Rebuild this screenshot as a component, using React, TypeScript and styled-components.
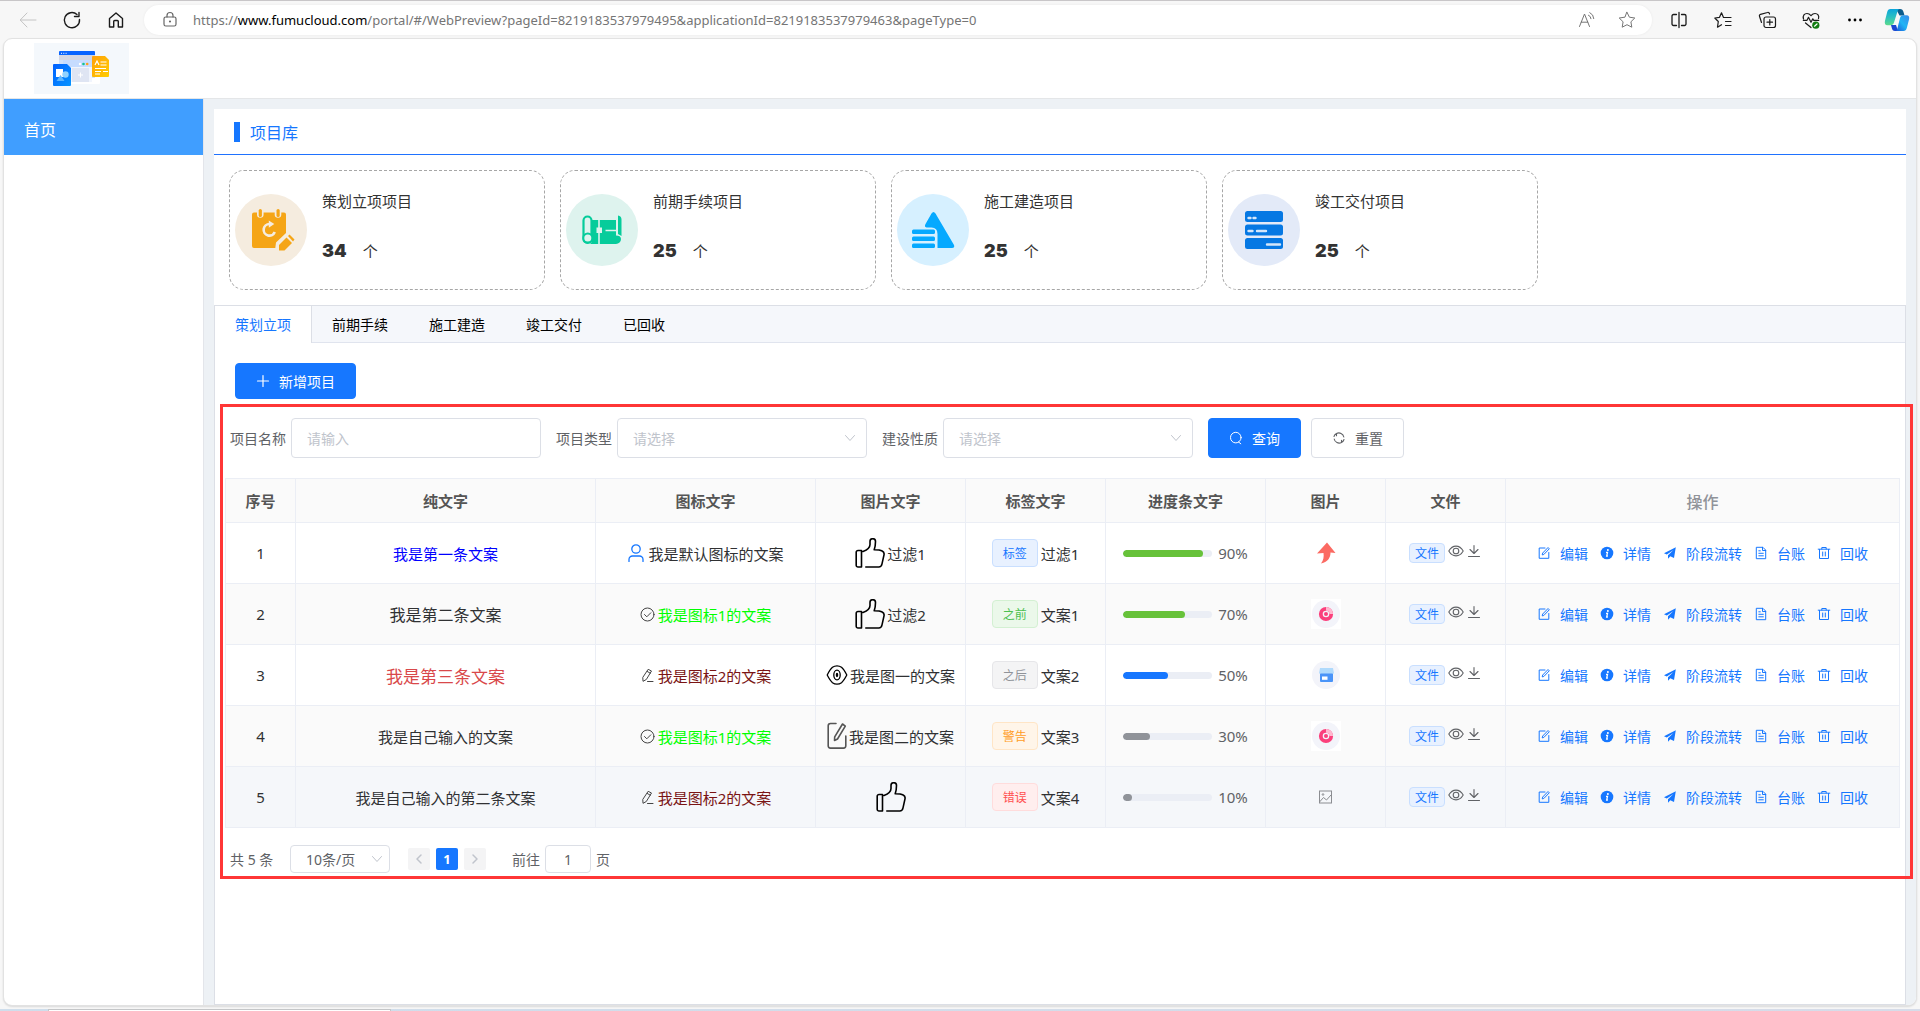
import React from "react";
import styled, { createGlobalStyle } from "styled-components";

const SANS = '"Noto Sans", "Noto Sans CJK SC", sans-serif';

const GlobalStyle = createGlobalStyle`
  *, *::before, *::after { box-sizing: border-box; }
  body { margin: 0; background: #f7f7f7; font-family: ${SANS}; font-size: 14px; color: #303133; }
  button, input, select { font: inherit; margin: 0; }
  button { cursor: pointer; padding: 0; background: none; border: 0; color: inherit; }
  svg { display: block; flex: none; }
`;

/* ---------- browser shell ---------- */

const Browser = styled.div`
  display: flex;
  flex-direction: column;
  min-height: 100vh;
`;

const AddressRow = styled.header`
  display: flex;
  align-items: center;
  height: 38px;
  padding: 1px 3px 0 6px;
  border-top: 1px solid #c8c6c8;
  color: #1b1b1b;
`;

const ChromeButton = styled.button<{ $width?: number; $color?: string }>`
  display: grid;
  place-items: center;
  width: ${(p) => p.$width ?? 44}px;
  height: 30px;
  color: ${(p) => p.$color ?? "#1b1b1b"};
`;

const UrlPill = styled.div`
  flex: 1;
  display: flex;
  align-items: center;
  height: 30px;
  margin: 0 5px 0 6px;
  padding: 0 5px 0 14px;
  border-radius: 15px;
  background: #fff;
  box-shadow: 0 0 3px rgba(0, 0, 0, 0.06);
`;

const UrlText = styled.div`
  flex: 1;
  margin-left: 11px;
  font-family: "Noto Sans", sans-serif;
  font-size: 13px;
  line-height: 20px;
  color: #757575;
  white-space: nowrap;
  overflow: hidden;
`;

const UrlHost = styled.span`
  color: #000;
`;

const PageFrame = styled.div`
  flex: 1;
  display: flex;
  flex-direction: column;
  margin: 0 3px;
  border: 1px solid #e2e2e2;
  border-radius: 9px;
  background: #fff;
  overflow: hidden;
  box-shadow: 0 1px 2px rgba(0, 0, 0, 0.12);
`;

const Taskbar = styled.div`
  display: flex;
  height: 2px;
  margin-top: 3px;
  padding-left: 48px;
  background: linear-gradient(90deg, #cfdeec, #d6dce9);
`;

const TaskbarWindow = styled.div`
  width: 343px;
  border: 1px solid #c4c6c8;
  border-bottom: 0;
  background: #fff;
`;

/* ---------- application layout ---------- */

const AppHeader = styled.div`
  height: 60px;
  padding: 4px 30px;
  border-bottom: 1px solid #e4e6e8;
`;

const AppBody = styled.div`
  flex: 1;
  display: flex;
`;

const Sidebar = styled.nav`
  width: 200px;
  border-right: 1px solid #e3e5ea;
`;

const SidebarLink = styled.a`
  display: flex;
  align-items: center;
  height: 56px;
  padding: 4px 20px 0;
  background: #409eff;
  color: #fff;
  font-size: 16px;
  text-decoration: none;
`;

const Main = styled.main`
  flex: 1;
  display: flex;
  flex-direction: column;
  min-width: 0;
  padding: 10px 10px 0;
  background: #edf1f5;
`;

const Overview = styled.section`
  background: #fff;
`;

const SectionTitle = styled.h1`
  display: flex;
  align-items: center;
  gap: 10px;
  height: 46px;
  margin: 0;
  padding: 0 20px;
  border-bottom: 1px solid #1f72ff;
  color: #1677ff;
  font-size: 16px;
  font-weight: 400;

  &::before {
    content: "";
    width: 6px;
    height: 20px;
    background: #1677ff;
  }
`;

const StatRow = styled.div`
  display: grid;
  grid-template-columns: repeat(4, minmax(0, 316px));
  gap: 15px;
  padding: 15px;
`;

const StatCard = styled.article`
  display: flex;
  align-items: center;
  gap: 15px;
  height: 120px;
  padding: 0 5px;
  border: 1px dashed #a6a6a6;
  border-radius: 15px;
`;

const StatInfo = styled.div`
  align-self: flex-start;
  display: flex;
  flex-direction: column;
  gap: 25px;
  padding-top: 18px;
`;

const StatName = styled.div`
  font-size: 15px;
  line-height: 24px;
  color: #333;
`;

const StatValue = styled.div`
  display: flex;
  align-items: center;
  gap: 16px;
  line-height: 26px;
  font-size: 15px;
  color: #333;
`;

const StatNumber = styled.strong`
  font-family: Inter, "DejaVu Sans", sans-serif;
  font-size: 18px;
  font-weight: 900;
`;

const Panel = styled.section`
  flex: 1;
  display: flex;
  flex-direction: column;
  border: 1px solid #dcdfe6;
  background: #fff;
`;

const TabList = styled.div`
  display: flex;
  height: 37px;
  border-bottom: 1px solid #e0e4ee;
  background: #f5f7fb;
`;

const Tab = styled.button<{ $active?: boolean }>`
  height: 37px;
  padding: 0 20px 2px;
  border-right: 1px solid ${(p) => (p.$active ? "#dcdfe6" : "transparent")};
  background: ${(p) => (p.$active ? "#fff" : "transparent")};
  color: ${(p) => (p.$active ? "#1677ff" : "#000")};
  font-size: 14px;
`;

const PanelToolbar = styled.div`
  padding: 20px 20px 5px;
`;

const ActionButton = styled.button<{ $primary?: boolean; $height?: number }>`
  display: inline-flex;
  align-items: center;
  gap: 9px;
  height: ${(p) => p.$height ?? 40}px;
  padding: 0 20px;
  border: 1px solid ${(p) => (p.$primary ? "#1677ff" : "#dcdfe6")};
  border-radius: 4px;
  background: ${(p) => (p.$primary ? "#1677ff" : "#fff")};
  color: ${(p) => (p.$primary ? "#fff" : "#606266")};
  font-size: 14px;
  vertical-align: top;
`;

const Highlight = styled.div`
  margin: 0 -8px 0 5px;
  padding: 11px 10px 3px 2px;
  border: 3px solid #ff3636;
`;

/* ---------- search form ---------- */

const SearchForm = styled.form`
  display: flex;
  gap: 15px;
  padding: 0 5px;
`;

const Field = styled.div`
  display: flex;
  align-items: center;
  gap: 5px;
`;

const FieldLabel = styled.label`
  color: #606266;
`;

const TextInput = styled.input<{ $width?: number; $height?: number; $center?: boolean }>`
  width: ${(p) => p.$width ?? 250}px;
  height: ${(p) => p.$height ?? 40}px;
  padding: 0 ${(p) => (p.$center ? 3 : 15)}px;
  border: 1px solid #dcdfe6;
  border-radius: 4px;
  background: #fff;
  color: #606266;
  text-align: ${(p) => (p.$center ? "center" : "left")};

  &::placeholder { color: #c0c4cc; }
`;

const SelectBox = styled.div<{ $pad?: number }>`
  display: grid;
  align-items: center;
  & > * { grid-area: 1 / 1; }
  & > svg { justify-self: end; margin-right: ${(p) => p.$pad ?? 11}px; pointer-events: none; }
`;

const Select = styled.select<{ $width?: number; $height?: number; $muted?: boolean }>`
  appearance: none;
  width: ${(p) => p.$width ?? 250}px;
  height: ${(p) => p.$height ?? 40}px;
  padding: 0 15px;
  border: 1px solid #dcdfe6;
  border-radius: 4px;
  background: #fff;
  color: ${(p) => (p.$muted ? "#c0c4cc" : "#606266")};
`;

const ButtonPair = styled.div`
  display: flex;
  gap: 10px;
`;

/* ---------- table ---------- */

const Table = styled.table`
  width: 100%;
  margin: 20px 0 17px;
  border: 1px solid #ebeef5;
  border-width: 1px 0 0 1px;
  border-spacing: 0;
  table-layout: fixed;
  font-size: 15px;
`;

const HeadCell = styled.th<{ $plain?: boolean }>`
  height: 44px;
  padding: 0;
  border: 1px solid #ebeef5;
  border-width: 0 1px 1px 0;
  background: #fafafa;
  color: ${(p) => (p.$plain ? "#909399" : "#555")};
  font-size: ${(p) => (p.$plain ? 16 : 15)}px;
  font-weight: ${(p) => (p.$plain ? 500 : 700)};
`;

const Row = styled.tr<{ $tone: "plain" | "striped" | "hover" }>`
  background: ${(p) => ({ plain: "#fff", striped: "#fafafa", hover: "#f5f7fa" })[p.$tone]};
`;

const Cell = styled.td`
  height: 61px;
  padding: 0;
  border: 1px solid #ebeef5;
  border-width: 0 1px 1px 0;
  text-align: center;
  color: #303133;
`;

const CellText = styled.span<{ $color?: string; $size?: number }>`
  color: ${(p) => p.$color ?? "#303133"};
  font-size: ${(p) => p.$size ?? 15}px;
  white-space: nowrap;
`;

const Inline = styled.div<{ $gap?: number }>`
  display: flex;
  align-items: center;
  justify-content: center;
  gap: ${(p) => p.$gap ?? 3}px;
`;

const tagTones = {
  primary: ["#e8f1ff", "#c9dfff", "#1677ff"],
  success: ["#ebf8ea", "#d3f0d2", "#4cc04f"],
  info: ["#f4f4f5", "#e6e6e9", "#909399"],
  warning: ["#fff5e9", "#ffe5c6", "#ff9d26"],
  danger: ["#ffeeee", "#ffdcdc", "#ff5050"],
};
type Tone = keyof typeof tagTones;

const Tag = styled.span<{ $tone: Tone; $small?: boolean }>`
  height: ${(p) => (p.$small ? 20 : 28)}px;
  padding: 0 ${(p) => (p.$small ? 5 : 10)}px;
  border: 1px solid ${(p) => tagTones[p.$tone][1]};
  border-radius: 4px;
  background: ${(p) => tagTones[p.$tone][0]};
  color: ${(p) => tagTones[p.$tone][2]};
  font-size: 12px;
  line-height: ${(p) => (p.$small ? 20 : 28)}px;
`;

const Track = styled.div`
  width: 89px;
  height: 7px;
  border-radius: 4px;
  background: #ebeef5;
  overflow: hidden;
`;

const Bar = styled.div<{ $color: string }>`
  height: 7px;
  border-radius: 4px;
  background: ${(p) => p.$color};
`;

const IconButton = styled.button`
  display: grid;
  place-items: center;
  width: 16px;
  height: 20px;
  color: #606266;
`;

const FileActions = styled.div`
  display: flex;
  gap: 2px;
  height: 24px;
`;

const Operations = styled.div`
  display: flex;
  justify-content: center;
  gap: 12px;
`;

const Operation = styled.button`
  display: flex;
  align-items: center;
  gap: 9px;
  color: #1677ff;
  font-size: 14px;
  white-space: nowrap;
`;

/* ---------- pagination ---------- */

const Pagination = styled.div`
  display: flex;
  align-items: center;
  height: 28px;
  padding-left: 5px;
  gap: 16px;
  color: #606266;
`;

const Total = styled.span`
  min-width: 44px;
`;

const Pager = styled.div`
  display: flex;
  gap: 6px;
  padding: 0 10px 0 2px;
`;

const PageButton = styled.button<{ $current?: boolean }>`
  display: grid;
  place-items: center;
  width: 22px;
  height: 22px;
  border-radius: 2px;
  background: ${(p) => (p.$current ? "#1677ff" : "#f4f4f5")};
  color: ${(p) => (p.$current ? "#fff" : "#c0c4cc")};
  font-size: 13px;
  font-weight: 700;
`;

/* ---------- icons ---------- */

type StrokeProps = { size?: number; box?: number; width?: number; color?: string; children: React.ReactNode };

const Stroke = ({ size = 14, box = 14, width = 1, color = "currentColor", children }: StrokeProps) => (
  <svg width={size} height={size} viewBox={`0 0 ${box} ${box}`} fill="none" stroke={color} strokeWidth={width} strokeLinecap="round" strokeLinejoin="round" aria-hidden="true">
    {children}
  </svg>
);

const Chevron = ({ size = 12 }: { size?: number }) => (
  <Stroke size={size} box={12} color="#c0c4cc"><path d="M1.5 3.5 6 8.5l4.5-5" /></Stroke>
);

const BackIcon = () => <Stroke size={20} box={20} color="#c4c4c4"><path d="M18 10H2.5M9 3 2.2 10 9 17" /></Stroke>;
const ReloadIcon = () => (
  <Stroke size={20} box={20} width={1.4}><path d="M17.5 9.500A7.600 7.600 0 1 1 15 4.500M17 2.500V6.500H12.500" /></Stroke>
);
const HomeIcon = () => (
  <Stroke size={20} box={20} width={1.4}><path d="M3.500 8.500 10 3l6.500 5.500V17H12.300V11.500a1 1 0 0 0-1-1H8.700a1 1 0 0 0-1 1V17H3.500Z" /></Stroke>
);
const LockIcon = () => (
  <Stroke size={24} box={24} width={1.2} color="#666"><rect x="6" y="9" width="12" height="9" rx="1.800" /><path d="M9 9V7.500a3 3 0 0 1 6 0V9" /><circle cx="12" cy="13.500" r=".5" fill="#666" /></Stroke>
);
const ReadAloudIcon = () => (
  <Stroke size={20} box={20} color="#767676"><path d="M2.500 16.500 7.500 4l5 12.500M4.200 12.200h6.600M11.500 5.200a4 4 0 0 1 2.500 3.500M12.800 2.600a7 7 0 0 1 4 6" /></Stroke>
);
const StarIcon = () => (
  <Stroke size={20} box={20} color="#767676"><path d="m10 2.300 2.400 4.900 5.400.8-3.900 3.800.9 5.400L10 14.700l-4.800 2.500.9-5.400L2.200 8l5.400-.8Z" /></Stroke>
);
const SplitIcon = () => (
  <Stroke size={20} box={20} width={1.3}><path d="M7.500 4.500H4.500A1.500 1.500 0 0 0 3 6v8a1.500 1.500 0 0 0 1.500 1.500h3M12.500 4.500h3A1.500 1.500 0 0 1 17 6v8a1.500 1.500 0 0 1-1.500 1.500h-3M10 2.500v15" /></Stroke>
);
const FavoritesIcon = () => (
  <Stroke size={20} box={20} width={1.200}><path d="M10.500 7.500 8.500 2.800 6.500 7.300 1.800 8l3.500 3.500-.8 5.700 4-2.500M10.500 7.500H18M12.500 11.500H18M12.500 15.500H18" /></Stroke>
);
const CollectionsIcon = () => (
  <Stroke size={20} box={20} width={1.200}><rect x="7" y="7" width="11.500" height="10.500" rx="2" /><path d="M12.800 9.500v5.500M10 12.200h5.500M4.500 12.500 2.500 6.300a1.500 1.500 0 0 1 1-2L10.500 2.500a1.500 1.500 0 0 1 2 1.500" /></Stroke>
);
const HeartIcon = () => (
  <Stroke size={20} box={20} width={1.200}>
    <path d="M2.500 9C1.500 5.500 3.500 3.500 6 3.500c2 0 3 1 4 2.200 1-1.200 2-2.200 4-2.200 2.500 0 4.500 2 3.500 5M2.300 10.300H6l1.500-3 2.500 5 1.800-3.500 1 1.500h5M4.500 13l5.500 4.500" />
    <circle cx="14.800" cy="15.200" r="3.600" fill="#107c10" stroke="none" /><path d="m13.500 16.200 2.500-2.200" stroke="#fff" />
  </Stroke>
);
const MoreIcon = () => (
  <svg width="20" height="20" viewBox="0 0 20 20" aria-hidden="true"><circle cx="4.500" cy="10" r="1.400" /><circle cx="10" cy="10" r="1.400" /><circle cx="15.500" cy="10" r="1.400" /></svg>
);
const CopilotIcon = () => (
  <svg width="26" height="24" viewBox="0 0 26 24" aria-hidden="true">
    <defs>
      <linearGradient id="cpA" x1="0" y1="0" x2="0" y2="1"><stop offset="0" stopColor="#0aa5dc" /><stop offset=".5" stopColor="#2cc0c0" /><stop offset="1" stopColor="#5ddb8c" /></linearGradient>
      <linearGradient id="cpB" x1="0" y1="1" x2="1" y2="0"><stop offset="0" stopColor="#1a4fd6" /><stop offset=".5" stopColor="#1fb5f5" /><stop offset="1" stopColor="#3a88e8" /></linearGradient>
    </defs>
    <path d="M12 1h4c2 0 3 1 3.500 3l1 3.500h-5Z" fill="#0c5c8c" />
    <path d="M6.500 1H16c-1.500 0-2.200 1-2.700 3L10 14.500c-.6 1.800-1.400 2.800-3.300 2.800H3.500C1 17.300.4 15.500 1 12.800L3.200 4C3.700 2 4.700 1 6.500 1Z" fill="url(#cpA)" />
    <path d="M7 17h5l2 6h-3c-2 0-2.700-1-3.200-3Z" fill="#1a45d0" />
    <path d="M19.500 23H11c1.500 0 2-1 2.500-3L16 10c.6-1.900 1.400-2.800 3.300-2.800h3.200c2.500 0 3.100 1.800 2.500 4.300L22.800 20c-.5 2-1.500 3-3.300 3Z" fill="url(#cpB)" />
  </svg>
);

const LogoArt = () => (
  <svg width="95" height="51" viewBox="0 0 95 51" role="img" aria-label="logo">
    <defs>
      <linearGradient id="lgB" x1="0" y1="0" x2="1" y2="1"><stop offset="0" stopColor="#0060ff" /><stop offset="1" stopColor="#0795ff" /></linearGradient>
      <linearGradient id="lgO" x1="0" y1="0" x2="1" y2="1"><stop offset="0" stopColor="#ff9f0a" /><stop offset="1" stopColor="#ffce00" /></linearGradient>
    </defs>
    <rect width="95" height="51" fill="#f4f8fc" />
    <rect x="30" y="19" width="36" height="22" rx="1" fill="#fff" />
    <rect x="25" y="12" width="36" height="23" fill="#d2e2fa" />
    <rect x="25" y="12" width="36" height="5" fill="#d3d6e3" />
    <path d="M26 8h34a1 1 0 0 1 1 1v3H25V9a1 1 0 0 1 1-1Z" fill="#0864ff" />
    <path d="M27 10.300h1M29.300 10.300h1M31.600 10.300h1" stroke="#fff" />
    <rect x="29" y="17" width="29" height="7" fill="#c6dcff" />
    <path d="M34 24h24v15H34Z" fill="#f1f5fd" /><rect x="38" y="25" width="17" height="14" fill="#dfe5f3" />
    <path d="M46.500 29.500v5M44 32h5" stroke="#fff" />
    <circle cx="46" cy="21" r="1.200" fill="#fff" /><circle cx="49.500" cy="21" r="1.300" fill="#12c492" /><circle cx="53.200" cy="21" r="1.300" fill="#ff9f1a" />
    <path d="M20 21h13l4 4v17a1 1 0 0 1-1 1H20a1 1 0 0 1-1-1V22a1 1 0 0 1 1-1Z" fill="url(#lgB)" />
    <rect x="22" y="26" width="7" height="8" fill="#fff" /><circle cx="31.500" cy="31.500" r="3.200" fill="#8fd2ff" /><path d="m26.500 32 4 6h-8Z" fill="#5cb6ff" />
    <path d="M59 13h12l4 4v16a1 1 0 0 1-1 1H59a1 1 0 0 1-1-1V14a1 1 0 0 1 1-1Z" fill="url(#lgO)" />
    <path d="m61 22 2-4 2 4M66.500 19h6M66.500 22h6M61 25.500h11M61 28.500h6M69 28.500h5M61 31h5" stroke="#fff" fill="none" strokeWidth="1.200" />
  </svg>
);

const Disc = ({ fill, children }: { fill: string; children: React.ReactNode }) => (
  <svg width="72" height="72" viewBox="0 0 72 72" aria-hidden="true"><circle cx="36" cy="36" r="36" fill={fill} />{children}</svg>
);

const PlanArt = () => (
  <Disc fill="#f5ecdf">
    <path d="M19 18.500h3v2a3.300 3.300 0 0 0 6.600 0v-2H39.700v2a3.300 3.300 0 0 0 6.600 0v-2H49a2 2 0 0 1 2 2V39L41 48.500 40.300 54H19a2 2 0 0 1-2-2V20.500a2 2 0 0 1 2-2Z" fill="#f5a516" />
    <rect x="23.700" y="15" width="3.200" height="8" rx="1.600" fill="#f5a516" /><rect x="41.500" y="15" width="3.200" height="8" rx="1.600" fill="#f5a516" />
    <path d="M34.500 30a5.800 5.800 0 1 0 5.300 8" fill="none" stroke="#f5ecdf" strokeWidth="2.600" /><path d="m33.800 26.500 5.500 3.500-5.500 3.800Z" fill="#f5ecdf" />
    <path d="m51.500 43.500 5.500 5.500-7.500 7.500H44V51Z" fill="#f5a516" /><path d="m53 42 1.500-1.500 5 5L58 47.500Z" fill="#f5a516" />
  </Disc>
);
const BlueprintArt = () => (
  <Disc fill="#def3ee">
    <path d="M26 26H50V41.500c3 0 5 1 5 3.500a5 5 0 0 1-5 5H24c2-1.500 2-3 2-5Z" fill="#06cc9b" />
    <rect x="17.500" y="22.500" width="8" height="26.500" rx="4" fill="#def3ee" stroke="#06cc9b" strokeWidth="2.200" />
    <circle cx="21.800" cy="44" r="4.500" fill="#def3ee" stroke="#06cc9b" strokeWidth="2" />
    <path d="M52 21.500a4 4 0 0 1 3.500 4V42L52 40Z" fill="#06cc9b" />
    <path d="M33 26v8M33 39v11M39.500 36.500H50M50.800 25v16" stroke="#def3ee" strokeWidth="1.600" /><rect x="30.500" y="33.500" width="5.500" height="5.500" fill="#def3ee" />
  </Disc>
);
const BuildArt = () => (
  <Disc fill="#d6f0ff">
    <path d="M34.500 19.500q2-3 4 0L57 51q1 3-2 3H40.500V40q0-6.500-6-6.500h-5Q27 33 28.500 30Z" fill="#06a9ff" />
    <rect x="15" y="35.500" width="23" height="4.500" rx="1.500" fill="#06a9ff" /><rect x="15" y="42.500" width="23" height="4.500" rx="1.500" fill="#06a9ff" /><rect x="15" y="49.500" width="23" height="4.500" rx="1.500" fill="#06a9ff" />
  </Disc>
);
const DeliverArt = () => (
  <Disc fill="#e3eaf8">
    <g fill="#0678e3"><rect x="17" y="17" width="38" height="11" rx="2.500" /><rect x="17" y="30.500" width="38" height="11" rx="2.500" /><rect x="17" y="44" width="38" height="11" rx="2.500" /></g>
    <path d="M20.500 24h2M25.500 24h2M20.500 37h4M29 37h9M39 50.500h13" stroke="#d4e6fa" strokeWidth="2.400" strokeLinecap="round" />
  </Disc>
);

const PlusIcon = () => <Stroke width={1.2}><path d="M7 1.500v11M1.500 7h11" /></Stroke>;
const SearchIcon = () => <Stroke><circle cx="6.800" cy="6.600" r="5.300" /><path d="m9.500 11 2.300 1.800" /></Stroke>;
const RefreshIcon = () => (
  <Stroke width={1.100}><path d="M4.500 2.500A5 5 0 0 1 11.800 6M9.500 11.500A5 5 0 0 1 2.200 8M2 5.500A5 5 0 0 1 4.500 2.500V4.800M12 8.500a5 5 0 0 1-2.500 3V9.200" /></Stroke>
);
const UserIcon = () => (
  <Stroke size={18} box={18} width={1.300} color="#1677ff"><circle cx="9" cy="5" r="4.200" /><path d="M2 17.500v-2a3.500 3.500 0 0 1 3.500-3.500h7a3.500 3.500 0 0 1 3.500 3.500v2" /></Stroke>
);
const CheckIcon = () => <Stroke size={15} box={15} color="#444"><circle cx="7.500" cy="7.500" r="6.500" /><path d="m4.500 7.500 2.300 2.300 4-4" /></Stroke>;
const EditLineIcon = () => <Stroke size={15} box={15} color="#444"><path d="M8.500 1.500 11.500 3 6.300 11.500 3 13.300 2.800 9.800ZM7.300 3.500l3 1.700M7.500 13.500h5.500" /></Stroke>;
const ThumbIcon = () => (
  <Stroke size={30} box={30} width={1.600} color="#000"><path d="M3 12.500h3.500V29H3a1.800 1.800 0 0 1-1.800-1.800V14.300A1.800 1.800 0 0 1 3 12.500ZM8 13.500c4-1.500 7-3 7-7V3.500a2.500 2.500 0 0 1 5.500 0c0 3-.5 6-1.300 8.200 3.800 0 6.300.3 8 1.300 1.500.8 2.200 2 1.800 3.800l-2 9c-.4 2-1.200 3.200-3.200 3.200H10.800" /></Stroke>
);
const HexEyeIcon = () => (
  <Stroke size={22} box={22} width={1.300} color="#000"><path d="M1.200 11C3 7.500 4.500 5 6.500 3.300Q8.500 1.800 11 1.800t4.500 1.500C17.500 5 19 7.500 20.800 11 19 14.500 17.500 17 15.500 18.700Q13.500 20.200 11 20.200t-4.500-1.500C4.500 17 3 14.500 1.200 11Z" /><ellipse cx="11" cy="11" rx="3.200" ry="4.800" /><ellipse cx="11" cy="11" rx=".6" ry="1.500" /></Stroke>
);
const NoteIcon = () => (
  <svg width="20" height="28" viewBox="0 0 20 28" fill="none" stroke="#555" strokeWidth="1.600" strokeLinecap="round" strokeLinejoin="round" aria-hidden="true">
    <path d="M9 1.500H3.500a2.300 2.300 0 0 0-2.300 2.300v20a2.300 2.300 0 0 0 2.300 2.300h13a2.300 2.300 0 0 0 2.300-2.300V14M15.500 2l2.800 2.200L10.500 17l-3 1.500.2-3.700Z" />
  </svg>
);
const EyeIcon = () => <Stroke size={16} box={16} width={1.100}><path d="M.8 8C4.500 1.500 11.500 1.500 15.200 8 11.500 14.500 4.500 14.500.8 8Z" /><circle cx="8" cy="8" r="2.800" /></Stroke>;
const DownloadIcon = () => <Stroke size={14} box={14} width={1.100}><path d="M7 1.500v7.800M3 5.500l4 4 4-4M1.500 12.500h11" /></Stroke>;

const ArrowArt = () => <svg width="20" height="22" viewBox="0 0 20 22" aria-hidden="true"><path d="M11 .5 19.500 11 14.500 10.500C14.500 15 12.500 20 5 21.500 7.500 18 8 15 7.500 11L1 11.500Z" fill="#fb6a62" /></svg>;
const TargetArt = () => (
  <svg width="30" height="30" viewBox="0 0 30 30" aria-hidden="true">
    <rect width="30" height="30" fill="#fff" /><circle cx="15" cy="15" r="14" fill="#f3f4fa" />
    <circle cx="15" cy="15" r="5.200" fill="none" stroke="#fb3f7c" strokeWidth="3.800" /><path d="M15 9.800A5.200 5.200 0 0 1 20.200 15" fill="none" stroke="#ffb7cf" strokeWidth="3.800" /><circle cx="15" cy="15" r="2" fill="#fb3f7c" />
  </svg>
);
const StoreArt = () => (
  <svg width="30" height="30" viewBox="0 0 30 30" aria-hidden="true">
    <circle cx="15" cy="15" r="14" fill="#f3f4fa" /><rect x="9" y="13" width="13" height="9" rx="1" fill="#4a94f8" /><path d="M9 8h13l1 5.500H8Z" fill="#b0dafc" /><rect x="11" y="16.500" width="5.500" height="3.300" fill="#fff" />
  </svg>
);
const BrokenArt = () => (
  <svg width="30" height="30" viewBox="0 0 30 30" fill="none" stroke="#8b8d91" aria-hidden="true"><rect x="8.500" y="9" width="12" height="12" /><path d="m8.500 20 4-4.500 3 2.500 4.500-5" /><circle cx="12" cy="12.500" r=".8" /></svg>
);

const EditIcon = () => <Stroke><path d="M8 2H2.200v10.300h9.600V6.500M11.300 1.800l1 1-5.500 5.700-1.600.4.400-1.500Z" /></Stroke>;
const InfoIcon = () => (
  <svg width="14" height="14" viewBox="0 0 14 14" aria-hidden="true"><circle cx="7" cy="7" r="6.300" fill="#1677ff" /><circle cx="7.900" cy="3.900" r="1" fill="#fff" /><path d="M6 6.300h1.500L6.700 10h1.200" stroke="#fff" strokeWidth="1.300" fill="none" /></svg>
);
const SendIcon = () => <svg width="14" height="14" viewBox="0 0 14 14" aria-hidden="true"><path d="M12.800 1.200 11 12 7.300 10.200 5 12.800V9.200L10.500 4 3.800 8.600 1 7.300Z" fill="#1677ff" /></svg>;
const DocIcon = () => <Stroke><path d="M8.500 1.300H2.300v11.400h9.400V4.500ZM8.500 1.300v3.200h3.200M4.800 7.300h4.500M4.800 9.800h4.500M4.800 4.800h1.500" /></Stroke>;
const TrashIcon = () => <Stroke><path d="M1.200 3.200h11.600M4.800 3V1.500h4.400V3M2.500 3.500v9h9v-9M5.700 6v4M8.300 6v4" /></Stroke>;

/* ---------- data ---------- */

const stats = [
  { name: "策划立项项目", value: 34, art: <PlanArt /> },
  { name: "前期手续项目", value: 25, art: <BlueprintArt /> },
  { name: "施工建造项目", value: 25, art: <BuildArt /> },
  { name: "竣工交付项目", value: 25, art: <DeliverArt /> },
];

const tabs = ["策划立项", "前期手续", "施工建造", "竣工交付", "已回收"];

const columns = [
  { name: "序号", width: 70 },
  { name: "纯文字", width: 300 },
  { name: "图标文字", width: 220 },
  { name: "图片文字", width: 150 },
  { name: "标签文字", width: 140 },
  { name: "进度条文字", width: 160 },
  { name: "图片", width: 120 },
  { name: "文件", width: 120 },
  { name: "操作", width: undefined },
];

type ProjectRecord = {
  text: string; color?: string; size?: number;
  icon: React.ReactNode; iconText: string; iconColor?: string;
  picture: React.ReactNode; pictureText: string;
  tone: Tone; tag: string; tagText: string;
  percent: number; barColor: string; image: React.ReactNode;
};

const records: ProjectRecord[] = [
  { text: "我是第一条文案", color: "#0000ff", icon: <UserIcon />, iconText: "我是默认图标的文案", picture: <ThumbIcon />, pictureText: "过滤1", tone: "primary", tag: "标签", tagText: "过滤1", percent: 90, barColor: "#67c23a", image: <ArrowArt /> },
  { text: "我是第二条文案", size: 16, icon: <CheckIcon />, iconText: "我是图标1的文案", iconColor: "#00ff00", picture: <ThumbIcon />, pictureText: "过滤2", tone: "success", tag: "之前", tagText: "文案1", percent: 70, barColor: "#67c23a", image: <TargetArt /> },
  { text: "我是第三条文案", color: "#d9484a", size: 17, icon: <EditLineIcon />, iconText: "我是图标2的文案", iconColor: "#7a1414", picture: <HexEyeIcon />, pictureText: "我是图一的文案", tone: "info", tag: "之后", tagText: "文案2", percent: 50, barColor: "#1677ff", image: <StoreArt /> },
  { text: "我是自己输入的文案", icon: <CheckIcon />, iconText: "我是图标1的文案", iconColor: "#00ff00", picture: <NoteIcon />, pictureText: "我是图二的文案", tone: "warning", tag: "警告", tagText: "文案3", percent: 30, barColor: "#909399", image: <TargetArt /> },
  { text: "我是自己输入的第二条文案", icon: <EditLineIcon />, iconText: "我是图标2的文案", iconColor: "#7a1414", picture: <ThumbIcon />, pictureText: "", tone: "danger", tag: "错误", tagText: "文案4", percent: 10, barColor: "#909399", image: <BrokenArt /> },
];

const operations = [
  { name: "编辑", icon: <EditIcon /> },
  { name: "详情", icon: <InfoIcon /> },
  { name: "阶段流转", icon: <SendIcon /> },
  { name: "台账", icon: <DocIcon /> },
  { name: "回收", icon: <TrashIcon /> },
];

const rowTone = (index: number) => (index === 4 ? "hover" : index % 2 ? "striped" : "plain");

/* ---------- page ---------- */

const BrowserBar = () => (
  <AddressRow>
    <ChromeButton aria-label="返回"><BackIcon /></ChromeButton>
    <ChromeButton aria-label="刷新"><ReloadIcon /></ChromeButton>
    <ChromeButton aria-label="主页"><HomeIcon /></ChromeButton>
    <UrlPill>
      <LockIcon />
      <UrlText>https://<UrlHost>www.fumucloud.com</UrlHost>/portal/#/WebPreview?pageId=8219183537979495&amp;applicationId=8219183537979463&amp;pageType=0</UrlText>
      <ChromeButton $width={40} aria-label="朗读"><ReadAloudIcon /></ChromeButton>
      <ChromeButton $width={40} aria-label="收藏"><StarIcon /></ChromeButton>
    </UrlPill>
    <ChromeButton aria-label="拆分屏幕"><SplitIcon /></ChromeButton>
    <ChromeButton aria-label="收藏夹"><FavoritesIcon /></ChromeButton>
    <ChromeButton aria-label="集锦"><CollectionsIcon /></ChromeButton>
    <ChromeButton aria-label="浏览器概要"><HeartIcon /></ChromeButton>
    <ChromeButton aria-label="更多"><MoreIcon /></ChromeButton>
    <ChromeButton $width={40} aria-label="Copilot"><CopilotIcon /></ChromeButton>
  </AddressRow>
);

const Filters = () => (
  <SearchForm onSubmit={(e) => e.preventDefault()}>
    <Field>
      <FieldLabel htmlFor="name">项目名称</FieldLabel>
      <TextInput id="name" placeholder="请输入" />
    </Field>
    <Field>
      <FieldLabel htmlFor="type">项目类型</FieldLabel>
      <SelectBox><Select id="type" $muted><option>请选择</option></Select><Chevron /></SelectBox>
    </Field>
    <Field>
      <FieldLabel htmlFor="nature">建设性质</FieldLabel>
      <SelectBox><Select id="nature" $muted><option>请选择</option></Select><Chevron /></SelectBox>
    </Field>
    <ButtonPair>
      <ActionButton type="submit" $primary><SearchIcon />查询</ActionButton>
      <ActionButton type="reset"><RefreshIcon />重置</ActionButton>
    </ButtonPair>
  </SearchForm>
);

const ProjectTable = () => (
  <Table>
    <colgroup>{columns.map((c) => <col key={c.name} width={c.width} />)}</colgroup>
    <thead>
      <tr>{columns.map((c) => <HeadCell key={c.name} scope="col" $plain={c.name === "操作"}>{c.name}</HeadCell>)}</tr>
    </thead>
    <tbody>
      {records.map((r, i) => (
        <Row key={r.text} $tone={rowTone(i)}>
          <Cell>{i + 1}</Cell>
          <Cell><CellText $color={r.color} $size={r.size}>{r.text}</CellText></Cell>
          <Cell><Inline>{r.icon}<CellText $color={r.iconColor}>{r.iconText}</CellText></Inline></Cell>
          <Cell><Inline $gap={2}>{r.picture}{r.pictureText && <CellText>{r.pictureText}</CellText>}</Inline></Cell>
          <Cell><Inline><Tag $tone={r.tone}>{r.tag}</Tag><CellText>{r.tagText}</CellText></Inline></Cell>
          <Cell>
            <Inline $gap={6}>
              <Track><Bar $color={r.barColor} style={{ width: `${r.percent}%` }} /></Track>
              <CellText $color="#606266">{r.percent}%</CellText>
            </Inline>
          </Cell>
          <Cell><Inline>{r.image}</Inline></Cell>
          <Cell>
            <Inline>
              <Tag $tone="primary" $small>文件</Tag>
              <FileActions>
                <IconButton aria-label="预览"><EyeIcon /></IconButton>
                <IconButton aria-label="下载"><DownloadIcon /></IconButton>
              </FileActions>
            </Inline>
          </Cell>
          <Cell>
            <Operations>{operations.map((o) => <Operation key={o.name}>{o.icon}{o.name}</Operation>)}</Operations>
          </Cell>
        </Row>
      ))}
    </tbody>
  </Table>
);

const Paging = () => (
  <Pagination>
    <Total>共 5 条</Total>
    <SelectBox $pad={7}>
      <Select $width={100} $height={28} aria-label="每页条数"><option>10条/页</option></Select>
      <Chevron />
    </SelectBox>
    <Pager>
      <PageButton aria-label="上一页"><Stroke size={12} box={12} width={1.5}><path d="M8 2 4 6l4 4" /></Stroke></PageButton>
      <PageButton $current>1</PageButton>
      <PageButton aria-label="下一页"><Stroke size={12} box={12} width={1.5}><path d="m4 2 4 4-4 4" /></Stroke></PageButton>
    </Pager>
    <Field>
      <FieldLabel htmlFor="goto">前往</FieldLabel>
      <TextInput id="goto" $width={46} $height={28} $center defaultValue="1" />
      <span>页</span>
    </Field>
  </Pagination>
);

export default function App() {
  return (
    <Browser>
      <GlobalStyle />
      <BrowserBar />
      <PageFrame>
        <AppHeader><LogoArt /></AppHeader>
        <AppBody>
          <Sidebar><SidebarLink href="#home">首页</SidebarLink></Sidebar>
          <Main>
            <Overview>
              <SectionTitle>项目库</SectionTitle>
              <StatRow>
                {stats.map((s) => (
                  <StatCard key={s.name}>
                    {s.art}
                    <StatInfo>
                      <StatName>{s.name}</StatName>
                      <StatValue><StatNumber>{s.value}</StatNumber>个</StatValue>
                    </StatInfo>
                  </StatCard>
                ))}
              </StatRow>
            </Overview>
            <Panel>
              <TabList role="tablist">
                {tabs.map((t, i) => <Tab key={t} role="tab" aria-selected={i === 0} $active={i === 0}>{t}</Tab>)}
              </TabList>
              <PanelToolbar><ActionButton $primary $height={36}><PlusIcon />新增项目</ActionButton></PanelToolbar>
              <Highlight>
                <Filters />
                <ProjectTable />
                <Paging />
              </Highlight>
            </Panel>
          </Main>
        </AppBody>
      </PageFrame>
      <Taskbar><TaskbarWindow /></Taskbar>
    </Browser>
  );
}
